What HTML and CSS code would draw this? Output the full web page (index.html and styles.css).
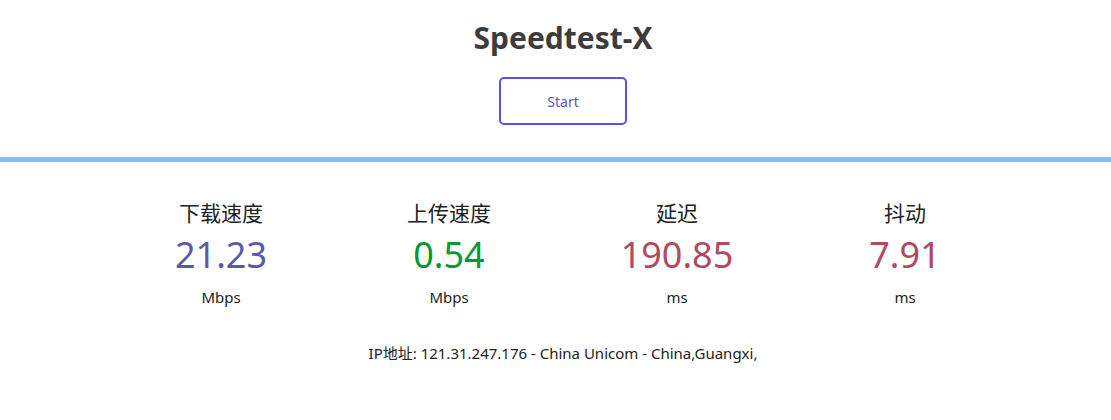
FILE: index.html
```html
<!DOCTYPE html>
<html lang="zh-CN">
<head>
<meta charset="utf-8">
<title>Speedtest-X</title>
<link rel="stylesheet" href="styles.css">
</head>
<body>
<header class="header">
  <h1 class="title">Speedtest-X</h1>
  <button class="start-btn" type="button">Start</button>
</header>
<div class="divider"></div>
<main class="results">
  <div class="stats">
    <div class="stat">
      <div class="stat-label">下载速度</div>
      <div class="stat-value dl">21.23</div>
      <div class="stat-unit">Mbps</div>
    </div>
    <div class="stat">
      <div class="stat-label">上传速度</div>
      <div class="stat-value ul">0.54</div>
      <div class="stat-unit">Mbps</div>
    </div>
    <div class="stat">
      <div class="stat-label">延迟</div>
      <div class="stat-value ping">190.85</div>
      <div class="stat-unit">ms</div>
    </div>
    <div class="stat">
      <div class="stat-label">抖动</div>
      <div class="stat-value ping">7.91</div>
      <div class="stat-unit">ms</div>
    </div>
  </div>
  <div class="ip-info">IP地址: 121.31.247.176 - China Unicom - China,Guangxi,</div>
</main>
</body>
</html>
```
FILE: styles.css
```css
html, body {
  margin: 0;
  padding: 0;
  background: #fff;
}
body {
  font-family: "Noto Sans", "Noto Sans CJK SC", sans-serif;
  color: #222;
}
.header {
  display: flex;
  flex-direction: column;
  align-items: center;
  padding: 18px 0 32px 15px;
}
.title {
  margin: 0;
  font-size: 30px;
  line-height: 40px;
  font-weight: 700;
  color: #3c3c3c;
}
.start-btn {
  margin-top: 19px;
  width: 128px;
  height: 48px;
  border: 2px solid #5a50f0;
  border-radius: 5px;
  background: #fff;
  color: #5b54b8;
  font-family: "Noto Sans", sans-serif;
  font-size: 14px;
}
.divider {
  height: 5px;
  background: #88bdfb;
}
.results {
  padding: 37px 0 0 15px;
  display: flex;
  flex-direction: column;
  align-items: center;
}
.stats {
  display: grid;
  grid-template-columns: repeat(4, 228px);
}
.stat {
  display: flex;
  flex-direction: column;
  align-items: center;
}
.stat-label {
  font-size: 21px;
  line-height: 28px;
  color: #222;
}
.stat-value {
  margin-top: 6px;
  font-size: 36px;
  line-height: 44px;
}
.dl { color: #5a5aa8; }
.ul { color: #009933; }
.ping { color: #b04a5c; }
.stat-unit {
  margin-top: 10px;
  font-size: 15px;
  line-height: 20px;
  color: #222;
}
.ip-info {
  margin-top: 36px;
  font-size: 15px;
  line-height: 20px;
  color: #222;
}
```
